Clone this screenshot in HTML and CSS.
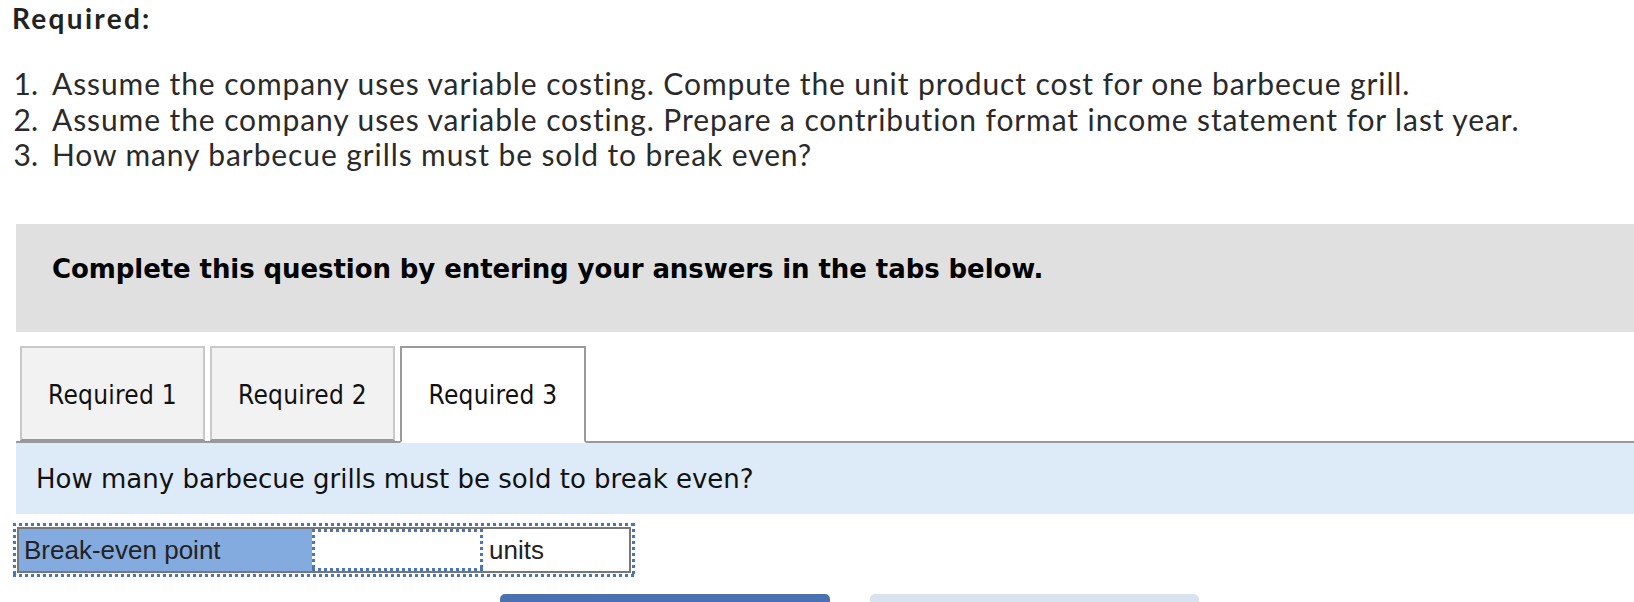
FILE: index.html
```html
<!DOCTYPE html>
<html lang="en">
<head>
<meta charset="utf-8">
<title>Required</title>
<link rel="stylesheet" href="styles.css">
</head>
<body>
<div class="page">
  <h2 class="req-title">Required:</h2>
  <ol class="req-list">
    <li>Assume the company uses variable costing. Compute the unit product cost for one barbecue grill.</li>
    <li>Assume the company uses variable costing. Prepare a contribution format income statement for last year.</li>
    <li>How many barbecue grills must be sold to break even?</li>
  </ol>

  <div class="instructions">Complete this question by entering your answers in the tabs below.</div>

  <div class="tabs">
    <div class="tab">Required 1</div>
    <div class="tab">Required 2</div>
    <div class="tab tab-active">Required 3</div>
  </div>

  <div class="question">How many barbecue grills must be sold to break even?</div>

  <div class="answer-wrap dotted">
    <div class="answer-row">
      <div class="answer-label">Break-even point</div>
      <div class="answer-input dotted"></div>
      <div class="answer-unit">units</div>
    </div>
  </div>

  <div class="nav-buttons">
    <div class="nav-btn nav-prev" aria-label="Previous"></div>
    <div class="nav-btn nav-next" aria-label="Next"></div>
  </div>
</div>
</body>
</html>
```

FILE: styles.css
```css
html, body {
  margin: 0;
  padding: 0;
  background: #ffffff;
}

.page {
  padding-left: 16px;
  overflow: hidden;
}

.req-title {
  margin: 0 0 0 -4px;
  font-family: Lato, "Open Sans", sans-serif;
  font-weight: 700;
  font-size: 28px;
  letter-spacing: 2.3px;
  line-height: 36px;
  color: #222222;
}

.req-list {
  list-style: none;
  counter-reset: item;
  margin: 30px 0 0 -16px;
  padding: 0;
  font-family: Lato, "Open Sans", sans-serif;
  font-size: 30px;
  letter-spacing: 0.9px;
  line-height: 35.5px;
  color: #2a2a2a;
}

.req-list li {
  counter-increment: item;
  display: flex;
}

.req-list li::before {
  content: counter(item) ".";
  flex: 0 0 38px;
  text-align: right;
  margin-right: 14px;
  letter-spacing: 0;
}

.instructions {
  margin-top: 51.5px;
  background: #e0e0e0;
  height: 108px;
  box-sizing: border-box;
  padding: 30px 0 0 36px;
  font-family: "DejaVu Sans", Verdana, sans-serif;
  font-weight: 700;
  font-size: 26px;
  letter-spacing: -0.08px;
  line-height: 30px;
  color: #000000;
}

.tabs {
  display: flex;
  gap: 5px;
  margin-top: 14px;
  padding-left: 4px;
  border-bottom: 2px solid #999999;
}

.tab {
  width: 185px;
  box-sizing: border-box;
  height: 95px;
  margin-bottom: -2px;
  border: 2px solid #c8c8c8;
  border-bottom: 2px solid #999999;
  background: #f2f2f2;
  padding-top: 32px;
  text-align: center;
  font-family: "DejaVu Sans Condensed", "DejaVu Sans", sans-serif;
  font-stretch: condensed;
  font-size: 26px;
  letter-spacing: 0.25px;
  line-height: 30px;
  color: #111111;
}

.tab-active {
  width: 186px;
  height: 97px;
  background: #ffffff;
  border-color: #9a9a9a;
  border-bottom: 2px solid #ffffff;
}

.question {
  background: #ddeaf7;
  height: 71px;
  box-sizing: border-box;
  padding: 21px 0 0 20px;
  font-family: "DejaVu Sans", Verdana, sans-serif;
  font-size: 26px;
  line-height: 30px;
  color: #111111;
}

/* square-dotted frame drawn with repeating gradients */
.dotted {
  background-image:
    repeating-linear-gradient(90deg, #4a76b8 0 3px, transparent 3px 6px),
    repeating-linear-gradient(90deg, #4a76b8 0 3px, transparent 3px 6px),
    repeating-linear-gradient(180deg, #4a76b8 0 3px, transparent 3px 6px),
    repeating-linear-gradient(180deg, #4a76b8 0 3px, transparent 3px 6px);
  background-size: 100% 3px, 100% 3px, 3px 100%, 3px 100%;
  background-position: left top, left bottom, left top, right top;
  background-repeat: no-repeat;
}

.answer-wrap {
  display: inline-block;
  margin: 9px 0 0 -3px;
  padding: 4px;
}

.answer-row {
  display: flex;
  border: 2px solid #777777;
  height: 42px;
  font-family: "Liberation Sans", Arial, sans-serif;
  font-size: 26px;
  line-height: 42px;
  color: #222222;
}

.answer-label {
  width: 293px;
  box-sizing: border-box;
  padding-left: 5px;
  background-color: #84abe0;
}

.answer-input {
  width: 171px;
  box-sizing: border-box;
  background-color: #ffffff;
}

.answer-unit {
  width: 146px;
  box-sizing: border-box;
  padding-left: 6px;
  background-color: #ffffff;
}

.nav-buttons {
  display: flex;
  gap: 40px;
  margin-top: 17px;
  padding-left: 484px;
}

.nav-btn {
  width: 330px;
  height: 50px;
  border-radius: 5px;
}

.nav-prev {
  background: #4a72b1;
}

.nav-next {
  width: 329px;
  background: #d9e3ef;
}
```
